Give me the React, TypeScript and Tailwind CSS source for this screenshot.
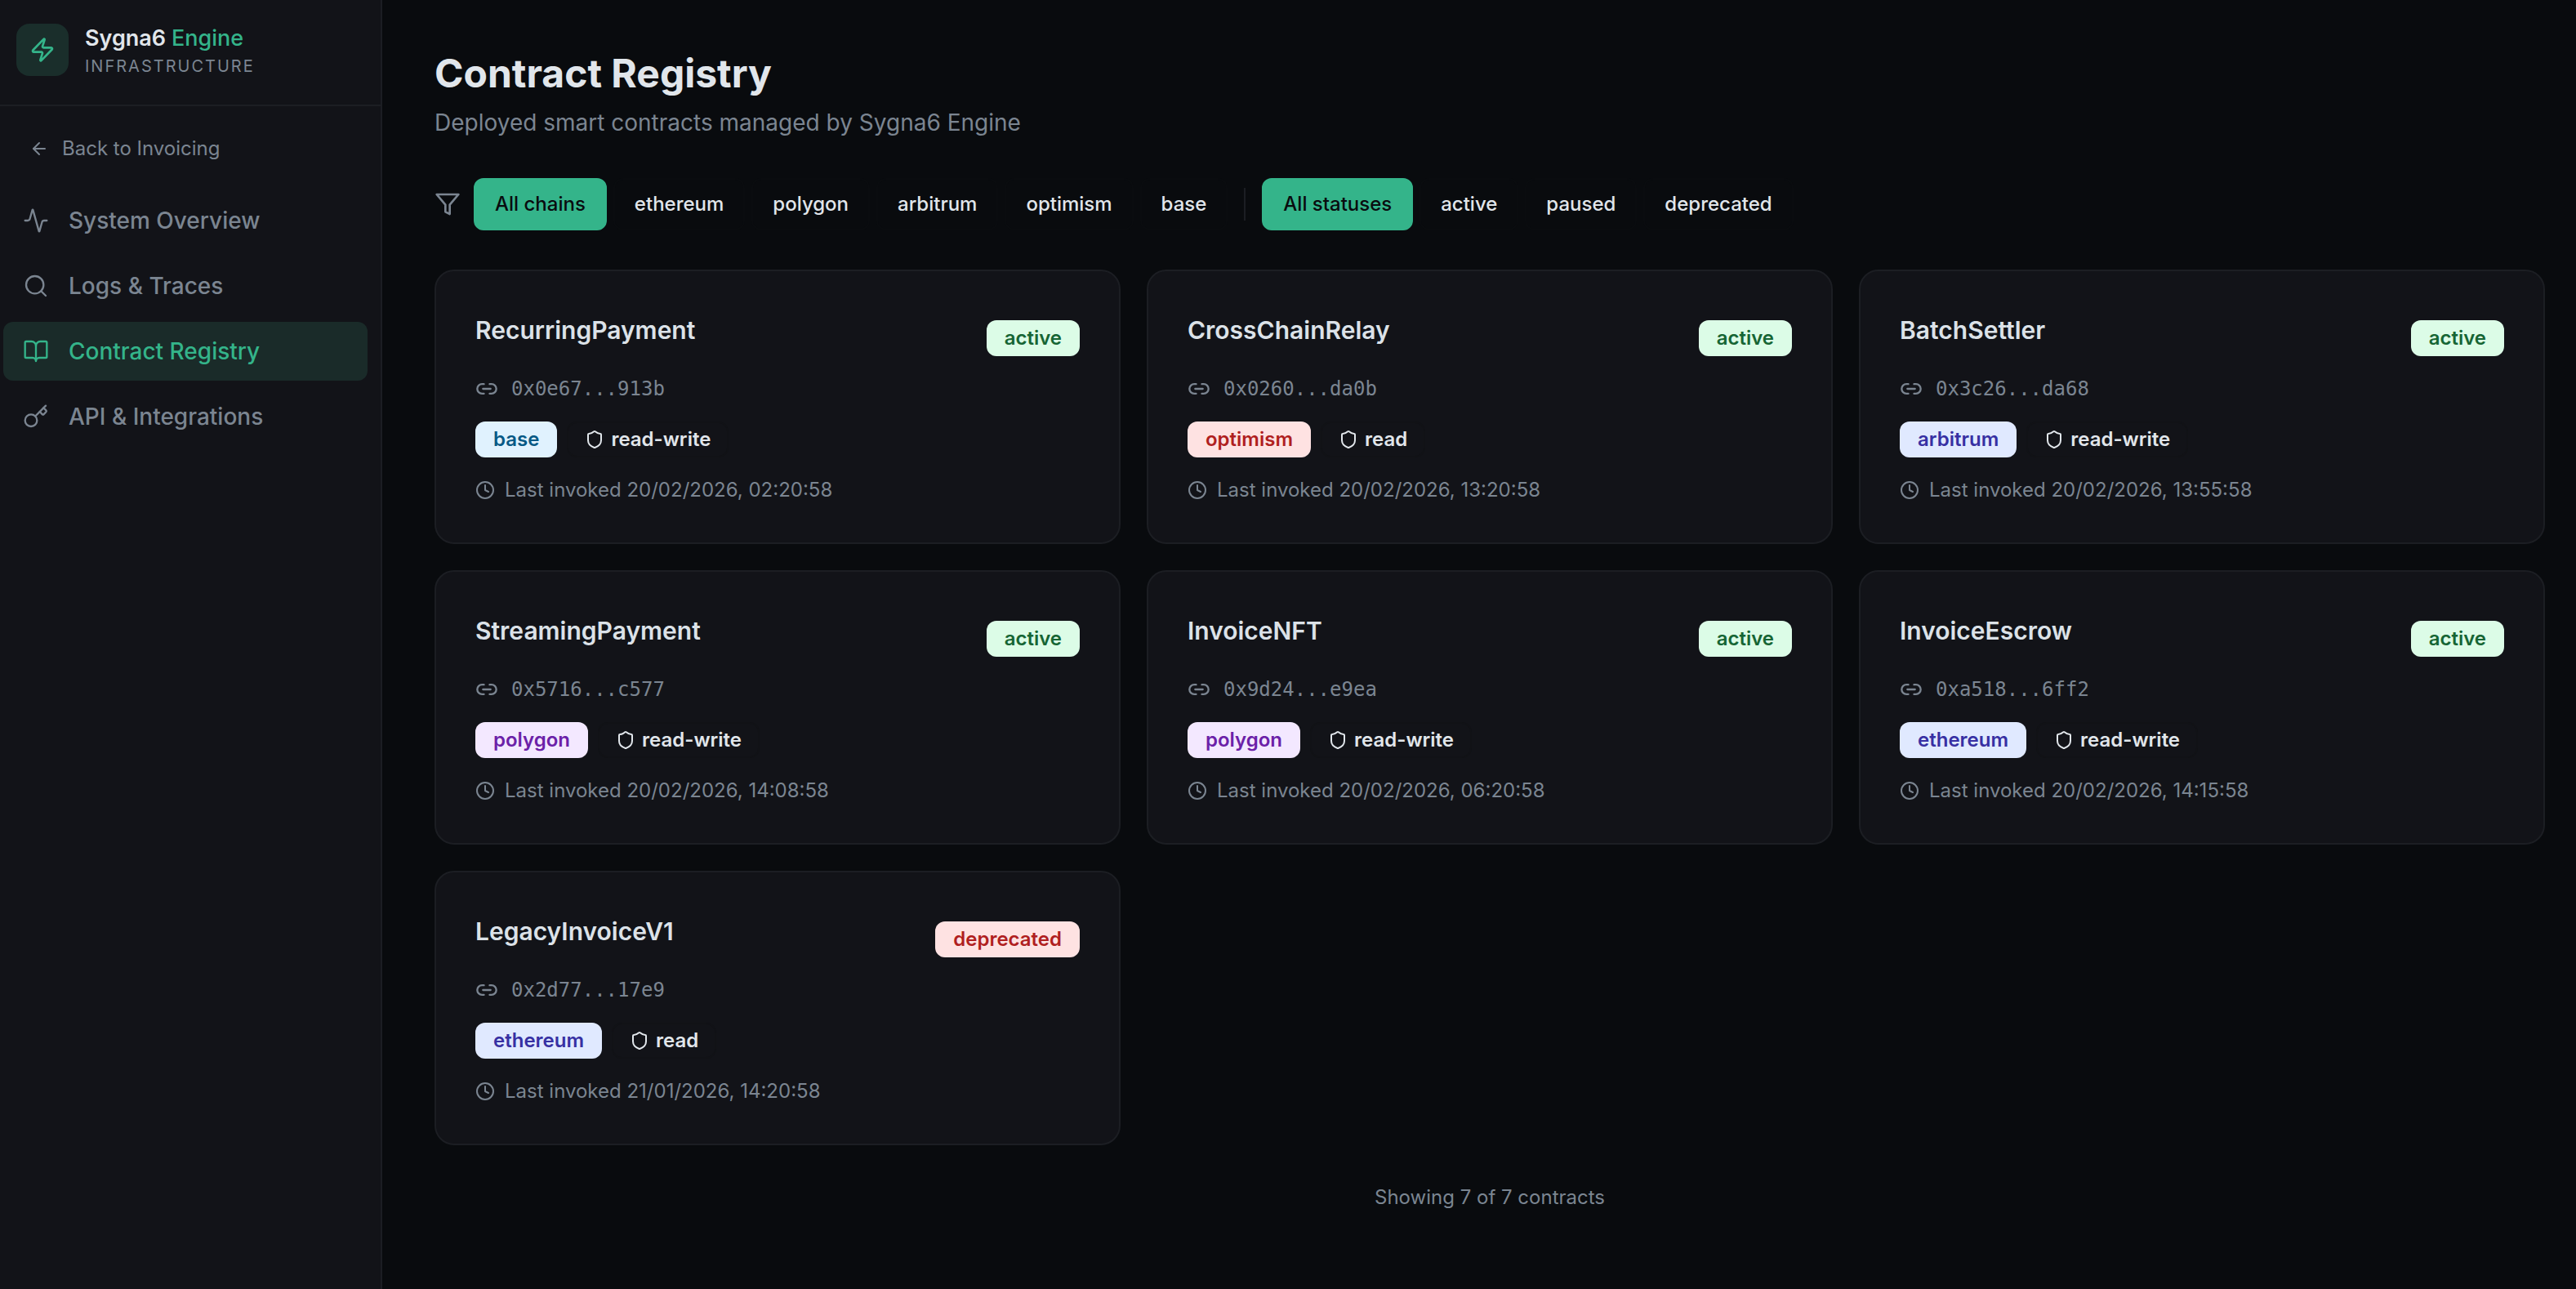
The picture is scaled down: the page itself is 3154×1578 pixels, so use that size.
import React, { useState } from "react";
import { Activity, ArrowLeft, BookOpen, Clock, Key, Link2, Search, Shield, Zap } from "lucide-react";
import type { LucideIcon } from "lucide-react";

interface NavItem {
  label: string;
  icon: LucideIcon;
}

interface Contract {
  name: string;
  address: string;
  chain: string;
  access: string;
  status: string;
  lastInvoked: string;
}

const navItems: NavItem[] = [
  { label: "System Overview", icon: Activity },
  { label: "Logs & Traces", icon: Search },
  { label: "Contract Registry", icon: BookOpen },
  { label: "API & Integrations", icon: Key },
];

const chains = ["All chains", "ethereum", "polygon", "arbitrum", "optimism", "base"];
const statuses = ["All statuses", "active", "paused", "deprecated"];

const contracts: Contract[] = [
  { name: "RecurringPayment", address: "0x0e67...913b", chain: "base", access: "read-write", status: "active", lastInvoked: "20/02/2026, 02:20:58" },
  { name: "CrossChainRelay", address: "0x0260...da0b", chain: "optimism", access: "read", status: "active", lastInvoked: "20/02/2026, 13:20:58" },
  { name: "BatchSettler", address: "0x3c26...da68", chain: "arbitrum", access: "read-write", status: "active", lastInvoked: "20/02/2026, 13:55:58" },
  { name: "StreamingPayment", address: "0x5716...c577", chain: "polygon", access: "read-write", status: "active", lastInvoked: "20/02/2026, 14:08:58" },
  { name: "InvoiceNFT", address: "0x9d24...e9ea", chain: "polygon", access: "read-write", status: "active", lastInvoked: "20/02/2026, 06:20:58" },
  { name: "InvoiceEscrow", address: "0xa518...6ff2", chain: "ethereum", access: "read-write", status: "active", lastInvoked: "20/02/2026, 14:15:58" },
  { name: "LegacyInvoiceV1", address: "0x2d77...17e9", chain: "ethereum", access: "read", status: "deprecated", lastInvoked: "21/01/2026, 14:20:58" },
];

const chainColors: Record<string, string> = {
  base: "bg-[#e0f2fe] text-[#075985]",
  optimism: "bg-[#fee2e2] text-[#b01f1f]",
  arbitrum: "bg-[#e0e9ff] text-[#3730a3]",
  ethereum: "bg-[#e0e9ff] text-[#3730a3]",
  polygon: "bg-[#f3e8ff] text-[#6b21a8]",
};

const statusColors: Record<string, string> = {
  active: "bg-[#dcfce7] text-[#166534]",
  paused: "bg-[#fef3c7] text-[#92400e]",
  deprecated: "bg-[#fee2e2] text-[#b01f1f]",
};

const badge = "inline-flex h-11 items-center gap-2 rounded-xl border-2 px-5 text-[24px] font-semibold";

const Sidebar: React.FC = () => (
  <aside className="w-[468px] shrink-0 border-r-2 border-[#1c1e23] bg-[#121318]">
    <div className="flex items-start gap-5 border-b-2 border-[#1c1e23] px-5 py-[29px]">
      <div className="flex size-16 items-center justify-center rounded-2xl bg-[#1a2e2b]">
        <Zap className="size-8 text-[#34b48a]" />
      </div>
      <div className="pt-0.5">
        <p className="text-[27px] leading-8 font-semibold text-[#e1e6eb]">
          Sygna6 <span className="font-medium text-[#34b48a]">Engine</span>
        </p>
        <p className="text-[20px] leading-9 tracking-widest text-[#7b8591]">INFRASTRUCTURE</p>
      </div>
    </div>
    <a href="#invoicing" className="mt-8 flex h-10 items-center gap-4 px-9 text-[24px] text-[#7b8591]">
      <ArrowLeft className="size-6" />
      Back to Invoicing
    </a>
    <nav className="mt-8 flex flex-col gap-2 pr-4 pl-1">
      {navItems.map(({ label, icon: Icon }) => (
        <a
          key={label}
          href="#nav"
          className={`flex h-[72px] items-center gap-6 rounded-xl px-6 text-[28px] font-medium ${
            label === "Contract Registry" ? "bg-[#1a2b29] text-[#34b48a]" : "text-[#7b8591]"
          }`}
        >
          <Icon className="size-8" strokeWidth={1.75} />
          {label}
        </a>
      ))}
    </nav>
  </aside>
);

interface FilterGroupProps {
  options: string[];
  value: string;
  onChange: (value: string) => void;
}

const FilterGroup: React.FC<FilterGroupProps> = ({ options, value, onChange }) => (
  <div className="flex gap-2">
    {options.map((option) => (
      <button
        key={option}
        type="button"
        onClick={() => onChange(option)}
        className={`h-16 rounded-xl border-2 px-6 text-[24px] font-medium ${
          option === value ? "border-[#34b48a] bg-[#34b48a] text-[#090b0e]" : "border-[#0a0c0f] text-[#e1e6eb]"
        }`}
      >
        {option}
      </button>
    ))}
  </div>
);

const ContractCard: React.FC<{ contract: Contract }> = ({ contract }) => (
  <article className="flex flex-col gap-6 rounded-3xl border-2 border-[#1c1e23] bg-[#121318] p-12">
    <div className="flex items-start justify-between">
      <h2 className="text-[30px] leading-[48px] font-semibold text-[#dce2e8]">{contract.name}</h2>
      <span className={`mt-3 border-transparent ${badge} ${statusColors[contract.status]}`}>{contract.status}</span>
    </div>
    <div className="flex items-center gap-4 text-[#7b8591]">
      <Link2 className="size-7" />
      <span className="font-['DejaVu_Sans_Mono',monospace] text-[24px] leading-8">{contract.address}</span>
    </div>
    <div className="flex gap-3">
      <span className={`border-transparent ${badge} ${chainColors[contract.chain]}`}>{contract.chain}</span>
      <span className={`border-[#111216] text-[#e1e6eb] ${badge}`}>
        <Shield className="size-6" />
        {contract.access}
      </span>
    </div>
    <div className="flex items-center gap-3 text-[24px] leading-8 text-[#7b8591]">
      <Clock className="size-6" />
      Last invoked {contract.lastInvoked}
    </div>
  </article>
);

const App: React.FC = () => {
  const [chain, setChain] = useState("All chains");
  const [status, setStatus] = useState("All statuses");

  const visible = contracts.filter(
    (c) => (chain === "All chains" || c.chain === chain) && (status === "All statuses" || c.status === status)
  );

  return (
    <div className="flex min-h-screen bg-[#090b0e] font-['Inter',sans-serif]">
      <Sidebar />
      <main className="flex-1 pt-[58px] pr-[38px] pb-16 pl-16">
        <h1 className="text-[48px] leading-[64px] font-bold text-[#e1e6eb]">Contract Registry</h1>
        <p className="mt-2 text-[28px] leading-10 text-[#7b8591]">Deployed smart contracts managed by Sygna6 Engine</p>
        <div className="mt-12 flex items-center">
          <svg className="mr-4 size-8 text-[#7b8591]" fill="none" stroke="currentColor" viewBox="0 0 24 24">
            <path strokeLinecap="round" strokeLinejoin="round" strokeWidth="2" d="M22 3H2l8 9.46V19l4 2v-8.54L22 3z"></path>
          </svg>
          <FilterGroup options={chains} value={chain} onChange={setChain} />
          <div className="mx-5 h-10 w-0.5 bg-[#1c1e23]"></div>
          <FilterGroup options={statuses} value={status} onChange={setStatus} />
        </div>
        <div className="mt-12 grid grid-cols-3 gap-8">
          {visible.map((contract) => (
            <ContractCard key={contract.name} contract={contract} />
          ))}
        </div>
        <p className="mt-12 text-center text-[24px] leading-8 text-[#7b8591]">
          Showing {visible.length} of {contracts.length} contracts
        </p>
      </main>
    </div>
  );
};

export default App;
